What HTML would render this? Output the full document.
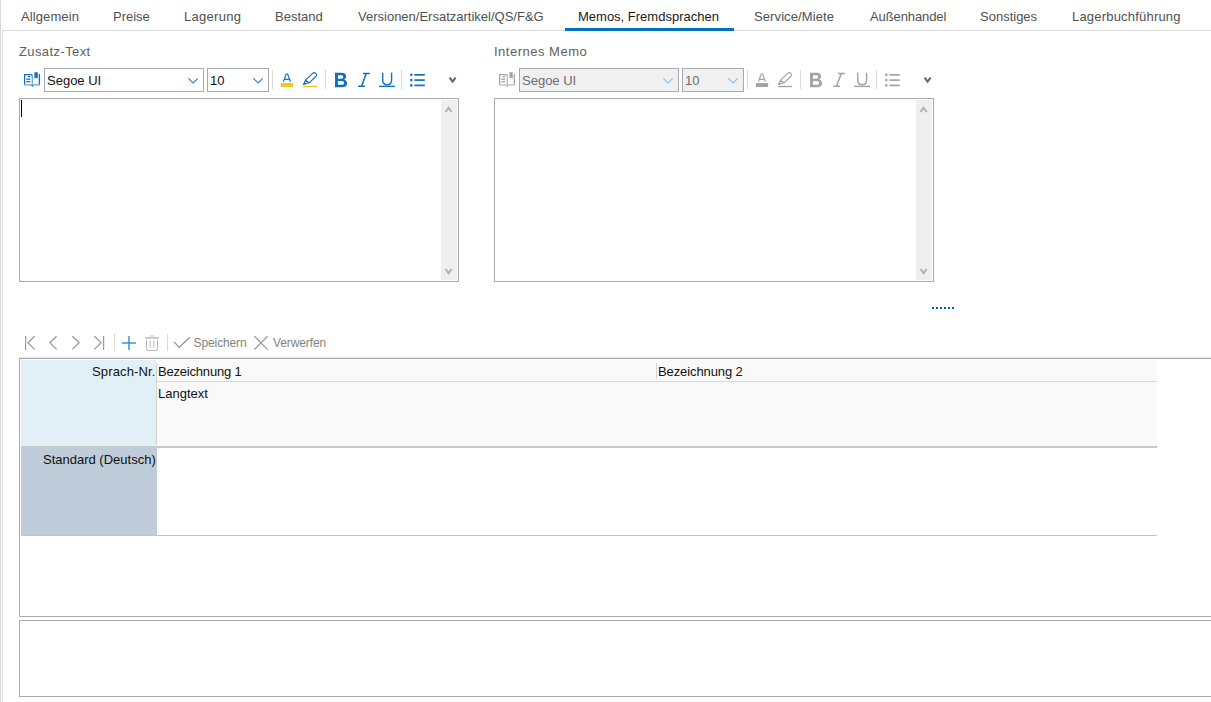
<!DOCTYPE html>
<html><head><meta charset="utf-8">
<style>
html,body{margin:0;padding:0;background:#fff;}
body{width:1211px;height:702px;position:relative;overflow:hidden;font-family:"Liberation Sans",sans-serif;font-size:13px;}
.a{position:absolute;}
.t{position:absolute;white-space:pre;line-height:16px;font-size:13px;}
</style></head><body>
<svg class="a" style="left:0;top:0" width="1211" height="702" viewBox="0 0 1211 702"><rect x="0" y="0" width="1" height="702" fill="#d9d9d9"/><rect x="2" y="30" width="1" height="672" fill="#dcdcdc"/><rect x="2" y="30" width="1209" height="1" fill="#dadada"/><rect x="565" y="28" width="169" height="3" fill="#0071bc"/><g transform="translate(0,0)"><g fill="none" stroke="#1172ba" stroke-width="1.3">
<path d="M24.6,85 V74.6 H31.2 L32.6,75.6"/>
<path d="M39.4,74 V85"/>
</g>
<rect x="31.6" y="75" width="1.4" height="10" fill="#6fb0dc"/>
<rect x="24" y="84.2" width="16" height="1.4" fill="#6fb0dc"/>
<path d="M30.8,85.4 H33.8 L32.3,87 Z" fill="#1172ba"/>
<rect x="27.8" y="76" width="2.4" height="1.3" fill="#1172ba"/>
<rect x="26.3" y="78.6" width="3.9" height="1.3" fill="#1172ba"/>
<rect x="26.3" y="81" width="3.9" height="1.3" fill="#1172ba"/>
<path d="M34.4,72.2 H37.8 V78.8 L36.1,77.4 L34.4,78.8 Z" fill="#1172ba"/>
<rect x="44.5" y="68.5" width="159" height="23" fill="#ffffff" stroke="#a9aab0" stroke-width="1"/><path d="M188.4,78.4 L193.1,83 L197.8,78.4" fill="none" stroke="#2a86c8" stroke-width="1.2"/><rect x="207.5" y="68.5" width="61" height="23" fill="#ffffff" stroke="#a9aab0" stroke-width="1"/><path d="M253.4,78.4 L258.1,83 L262.8,78.4" fill="none" stroke="#2a86c8" stroke-width="1.2"/><rect x="272" y="70" width="1" height="19" fill="#d9d9d9"/><rect x="325" y="70" width="1" height="19" fill="#d9d9d9"/><rect x="401" y="70" width="1" height="19" fill="#d9d9d9"/><path d="M283.4,81.8 L286.2,74 H287.6 L290.5,81.8 M284.5,79.4 H289.4" fill="none" stroke="#1172ba" stroke-width="1.15"/><rect x="280.8" y="83" width="12.4" height="3.9" rx="0.8" fill="#f6c61a"/><path d="M3.5,14.4 L5.5,10.2 L12.7,3.3 Q14.2,2 15.8,3.4 Q17.2,4.8 16.3,6 L9.1,12.8 Z M5.5,10.2 L9.1,12.8" transform="translate(300,70)" fill="none" stroke="#1172ba" stroke-width="1.15" stroke-linejoin="round"/><path d="M4.4,12.4 L6.6,13.8 L3.5,14.5 Z" transform="translate(300,70)" fill="#1172ba"/><rect x="303" y="85.8" width="14" height="1.4" fill="#f6c61a"/><path fill-rule="evenodd" fill="#1172ba" transform="translate(335,72.8)" d="M0,0 H6.6 C9.6,0 11.1,1.5 11.1,3.7 C11.1,5.3 10.1,6.3 8.9,6.8 C10.7,7.2 12.1,8.6 12.1,10.6 C12.1,13 10.4,14.4 7.1,14.4 H0 Z M2.9,2.5 V5.9 H6.1 C7.6,5.9 8.2,5.2 8.2,4.2 C8.2,3.1 7.6,2.5 6.1,2.5 Z M2.9,8.3 V11.9 H6.8 C8.4,11.9 9.1,11.2 9.1,10.1 C9.1,9 8.4,8.3 6.8,8.3 Z"/><path d="M363,73.6 H369.8 M358.1,86.2 H364.9 M366.2,73.6 L361.6,86.2" fill="none" stroke="#1172ba" stroke-width="1.5"/><path d="M382.7,72.8 V80 C382.7,83.2 384.5,84.8 387.15,84.8 C389.8,84.8 391.6,83.2 391.6,80 V72.8" fill="none" stroke="#1172ba" stroke-width="1.4"/><rect x="379" y="85.7" width="16" height="1.4" fill="#1172ba"/><circle cx="411.3" cy="74.85" r="1.3" fill="#1172ba"/><rect x="414.4" y="74.0" width="10.4" height="1.7" fill="#1172ba"/><circle cx="411.3" cy="80.1" r="1.3" fill="#1172ba"/><rect x="414.4" y="79.25" width="10.4" height="1.7" fill="#1172ba"/><circle cx="411.3" cy="85.4" r="1.3" fill="#1172ba"/><rect x="414.4" y="84.55000000000001" width="10.4" height="1.7" fill="#1172ba"/><path d="M449.6,77.6 L452.6,81.6 L455.6,77.6" fill="none" stroke="#636363" stroke-width="2"/><rect x="19.5" y="98.5" width="439" height="183" fill="#fff" stroke="#a9aab0" stroke-width="1"/><rect x="441" y="100" width="16" height="180" fill="#efefef"/><path d="M445.5,112 L448.6,107.8 L451.7,112" fill="none" stroke="#b3b3b3" stroke-width="2"/><path d="M445.5,269 L448.6,273.2 L451.7,269" fill="none" stroke="#b3b3b3" stroke-width="2"/></g><g transform="translate(475,0)"><g fill="none" stroke="#a3a3a3" stroke-width="1.3">
<path d="M24.6,85 V74.6 H31.2 L32.6,75.6"/>
<path d="M39.4,74 V85"/>
</g>
<rect x="31.6" y="75" width="1.4" height="10" fill="#c4c4c4"/>
<rect x="24" y="84.2" width="16" height="1.4" fill="#c4c4c4"/>
<path d="M30.8,85.4 H33.8 L32.3,87 Z" fill="#a3a3a3"/>
<rect x="27.8" y="76" width="2.4" height="1.3" fill="#a3a3a3"/>
<rect x="26.3" y="78.6" width="3.9" height="1.3" fill="#a3a3a3"/>
<rect x="26.3" y="81" width="3.9" height="1.3" fill="#a3a3a3"/>
<path d="M34.4,72.2 H37.8 V78.8 L36.1,77.4 L34.4,78.8 Z" fill="#a3a3a3"/>
<rect x="44.5" y="68.5" width="159" height="23" fill="#f0f0f0" stroke="#a9aab0" stroke-width="1"/><path d="M188.4,78.4 L193.1,83 L197.8,78.4" fill="none" stroke="#8cc2e3" stroke-width="1.2"/><rect x="207.5" y="68.5" width="61" height="23" fill="#f0f0f0" stroke="#a9aab0" stroke-width="1"/><path d="M253.4,78.4 L258.1,83 L262.8,78.4" fill="none" stroke="#8cc2e3" stroke-width="1.2"/><rect x="272" y="70" width="1" height="19" fill="#d9d9d9"/><rect x="325" y="70" width="1" height="19" fill="#d9d9d9"/><rect x="401" y="70" width="1" height="19" fill="#d9d9d9"/><path d="M283.4,81.8 L286.2,74 H287.6 L290.5,81.8 M284.5,79.4 H289.4" fill="none" stroke="#a3a3a3" stroke-width="1.15"/><rect x="280.8" y="83" width="12.4" height="3.9" rx="0.8" fill="#a3a3a3"/><path d="M3.5,14.4 L5.5,10.2 L12.7,3.3 Q14.2,2 15.8,3.4 Q17.2,4.8 16.3,6 L9.1,12.8 Z M5.5,10.2 L9.1,12.8" transform="translate(300,70)" fill="none" stroke="#a3a3a3" stroke-width="1.15" stroke-linejoin="round"/><path d="M4.4,12.4 L6.6,13.8 L3.5,14.5 Z" transform="translate(300,70)" fill="#a3a3a3"/><rect x="303" y="85.8" width="14" height="1.4" fill="#a3a3a3"/><path fill-rule="evenodd" fill="#a3a3a3" transform="translate(335,72.8)" d="M0,0 H6.6 C9.6,0 11.1,1.5 11.1,3.7 C11.1,5.3 10.1,6.3 8.9,6.8 C10.7,7.2 12.1,8.6 12.1,10.6 C12.1,13 10.4,14.4 7.1,14.4 H0 Z M2.9,2.5 V5.9 H6.1 C7.6,5.9 8.2,5.2 8.2,4.2 C8.2,3.1 7.6,2.5 6.1,2.5 Z M2.9,8.3 V11.9 H6.8 C8.4,11.9 9.1,11.2 9.1,10.1 C9.1,9 8.4,8.3 6.8,8.3 Z"/><path d="M363,73.6 H369.8 M358.1,86.2 H364.9 M366.2,73.6 L361.6,86.2" fill="none" stroke="#a3a3a3" stroke-width="1.5"/><path d="M382.7,72.8 V80 C382.7,83.2 384.5,84.8 387.15,84.8 C389.8,84.8 391.6,83.2 391.6,80 V72.8" fill="none" stroke="#a3a3a3" stroke-width="1.4"/><rect x="379" y="85.7" width="16" height="1.4" fill="#a3a3a3"/><circle cx="411.3" cy="74.85" r="1.3" fill="#a3a3a3"/><rect x="414.4" y="74.0" width="10.4" height="1.7" fill="#a3a3a3"/><circle cx="411.3" cy="80.1" r="1.3" fill="#a3a3a3"/><rect x="414.4" y="79.25" width="10.4" height="1.7" fill="#a3a3a3"/><circle cx="411.3" cy="85.4" r="1.3" fill="#a3a3a3"/><rect x="414.4" y="84.55000000000001" width="10.4" height="1.7" fill="#a3a3a3"/><path d="M449.6,77.6 L452.6,81.6 L455.6,77.6" fill="none" stroke="#636363" stroke-width="2"/><rect x="19.5" y="98.5" width="439" height="183" fill="#fff" stroke="#a9aab0" stroke-width="1"/><rect x="441" y="100" width="16" height="180" fill="#efefef"/><path d="M445.5,112 L448.6,107.8 L451.7,112" fill="none" stroke="#b3b3b3" stroke-width="2"/><path d="M445.5,269 L448.6,273.2 L451.7,269" fill="none" stroke="#b3b3b3" stroke-width="2"/></g><rect x="21" y="100" width="1" height="17" fill="#000"/><rect x="932" y="307" width="2" height="2" fill="#0062a8"/><rect x="936" y="307" width="2" height="2" fill="#0062a8"/><rect x="940" y="307" width="2" height="2" fill="#0062a8"/><rect x="944" y="307" width="2" height="2" fill="#0062a8"/><rect x="948" y="307" width="2" height="2" fill="#0062a8"/><rect x="952" y="307" width="2" height="2" fill="#0062a8"/><rect x="25" y="336" width="1.2" height="14" fill="#9a9a9a"/><path d="M34.6,336.2 L27.9,342.8 L34.6,349.4 M56.6,336.2 L49.9,342.8 L56.6,349.4 M72.4,336.2 L79.1,342.8 L72.4,349.4 M94.4,336.2 L101.1,342.8 L94.4,349.4" fill="none" stroke="#9a9a9a" stroke-width="1.25"/><rect x="103" y="336" width="1.2" height="14" fill="#9a9a9a"/><rect x="114" y="334" width="1" height="17" fill="#d9d9d9"/><rect x="167" y="334" width="1" height="17" fill="#d9d9d9"/><rect x="128" y="336" width="2" height="14" fill="#6cb0db"/><rect x="122" y="342" width="14" height="2" fill="#6cb0db"/><rect x="128" y="342" width="2" height="2" fill="#3f93d0"/><rect x="145" y="337" width="14" height="2" fill="#cdcdcd"/><path d="M149.9,337 V335.9 H154.1 V337" fill="none" stroke="#cdcdcd" stroke-width="1"/><path d="M146.5,340 V349 Q146.5,350.5 148,350.5 H156 Q157.5,350.5 157.5,349 V340" fill="none" stroke="#b9b9b9" stroke-width="1.1"/><rect x="149.4" y="340.5" width="1.6" height="7.3" fill="#d3d3d3"/><rect x="153" y="340.5" width="1.6" height="7.3" fill="#d3d3d3"/><path d="M174.2,342 L179.4,347.3 L189.6,337.2" fill="none" stroke="#959595" stroke-width="1.2"/><path d="M254.4,336.2 L267.6,349.6 M267.6,336.2 L254.4,349.6" fill="none" stroke="#9c9c9c" stroke-width="1.3"/><rect x="19" y="357" width="1192" height="1" fill="#e4e4e6"/><rect x="19" y="358" width="1192" height="1" fill="#a9aab0"/><rect x="19" y="358" width="1" height="259" fill="#a9aab0"/><rect x="19" y="616" width="1192" height="1" fill="#a9aab0"/><rect x="21" y="360" width="135" height="86" fill="#e1eff7"/><rect x="156" y="360" width="1001" height="86" fill="#f9f9f9"/><rect x="156" y="363" width="1" height="82" fill="#d2d2d2"/><rect x="656" y="363" width="1" height="16" fill="#d2d2d2"/><rect x="157" y="381" width="1000" height="1" fill="#dadada"/><rect x="21" y="446" width="1136" height="2" fill="#c9c9c9"/><rect x="21" y="448" width="136" height="87" fill="#bfccd9"/><rect x="21" y="535" width="1136" height="1" fill="#c3c3c3"/><rect x="19" y="620" width="1192" height="1" fill="#a9aab0"/><rect x="19" y="620" width="1" height="77" fill="#a9aab0"/><rect x="19" y="696" width="1192" height="1" fill="#a9aab0"/></svg>
<span class="t" style="left:21px;top:9px;color:#505050;font-size:13px;letter-spacing:0.1px;">Allgemein</span><span class="t" style="left:113px;top:9px;color:#505050;font-size:13px;letter-spacing:0px;">Preise</span><span class="t" style="left:184px;top:9px;color:#505050;font-size:13px;letter-spacing:0.3px;">Lagerung</span><span class="t" style="left:275px;top:9px;color:#505050;font-size:13px;letter-spacing:0px;">Bestand</span><span class="t" style="left:358px;top:9px;color:#505050;font-size:13px;letter-spacing:0px;">Versionen/Ersatzartikel/QS/F&amp;G</span><span class="t" style="left:754px;top:9px;color:#505050;font-size:13px;letter-spacing:0.1px;">Service/Miete</span><span class="t" style="left:870px;top:9px;color:#505050;font-size:13px;letter-spacing:-0.1px;">Außenhandel</span><span class="t" style="left:980px;top:9px;color:#505050;font-size:13px;letter-spacing:0px;">Sonstiges</span><span class="t" style="left:1072px;top:9px;color:#505050;font-size:13px;letter-spacing:0.2px;">Lagerbuchführung</span><span class="t" style="left:578px;top:9px;color:#1a1a1a;font-size:13px;letter-spacing:0px;">Memos, Fremdsprachen</span><span class="t" style="left:19px;top:44px;color:#5f5f5f;font-size:13px;letter-spacing:0.4px;">Zusatz-Text</span><span class="t" style="left:494px;top:44px;color:#5f5f5f;font-size:13px;letter-spacing:0.5px;">Internes Memo</span><span class="t" style="left:47px;top:73px;color:#111;font-size:13px;letter-spacing:0px;">Segoe UI</span><span class="t" style="left:210px;top:73px;color:#111;font-size:13px;letter-spacing:0px;">10</span><span class="t" style="left:522px;top:73px;color:#6d6d6d;font-size:13px;letter-spacing:0px;">Segoe UI</span><span class="t" style="left:685px;top:73px;color:#6d6d6d;font-size:13px;letter-spacing:0px;">10</span><span class="t" style="left:193.6px;top:335px;color:#828282;font-size:12px;letter-spacing:-0.12px;">Speichern</span><span class="t" style="left:273px;top:335px;color:#828282;font-size:12px;letter-spacing:-0.1px;">Verwerfen</span><span class="t" style="left:92px;top:364px;color:#111;font-size:13px;letter-spacing:0.15px;">Sprach-Nr.</span><span class="t" style="left:158px;top:364px;color:#111;font-size:13px;letter-spacing:-0.2px;">Bezeichnung 1</span><span class="t" style="left:658px;top:364px;color:#111;font-size:13px;letter-spacing:-0.1px;">Bezeichnung 2</span><span class="t" style="left:158px;top:386px;color:#111;font-size:13px;letter-spacing:0px;">Langtext</span><span class="t" style="left:43px;top:452px;color:#111;font-size:13px;letter-spacing:0px;">Standard (Deutsch)</span>
</body></html>
